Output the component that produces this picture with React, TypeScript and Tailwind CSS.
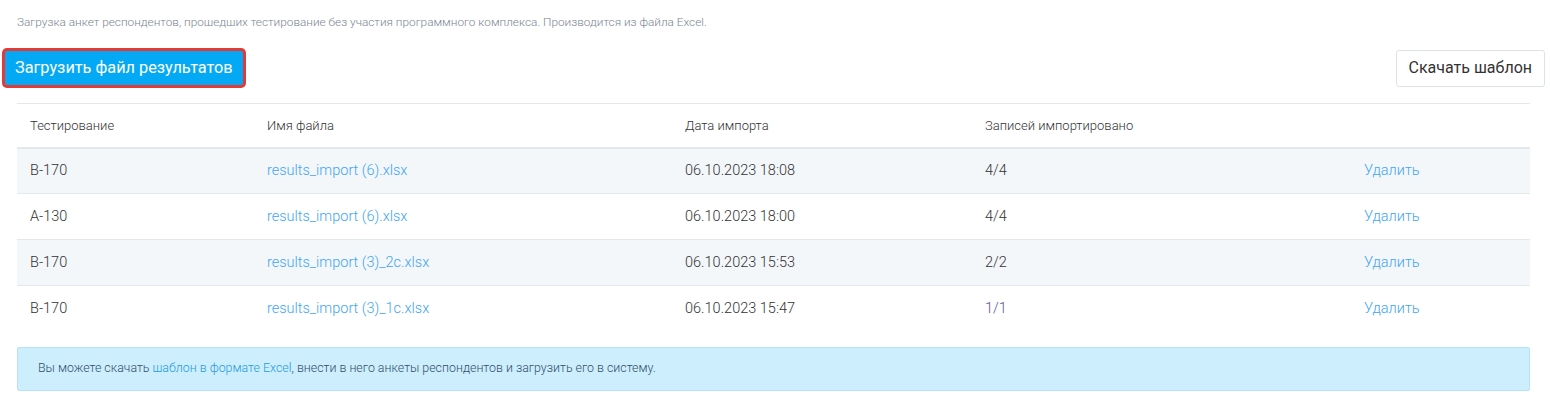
import React from 'react';

type ImportRow = {
  test: string;
  file: string;
  date: string;
  count: string;
  visited?: boolean;
};

const rows: ImportRow[] = [
  { test: 'B-170', file: 'results_import (6).xlsx', date: '06.10.2023 18:08', count: '4/4' },
  { test: 'A-130', file: 'results_import (6).xlsx', date: '06.10.2023 18:00', count: '4/4' },
  { test: 'B-170', file: 'results_import (3)_2c.xlsx', date: '06.10.2023 15:53', count: '2/2' },
  { test: 'B-170', file: 'results_import (3)_1c.xlsx', date: '06.10.2023 15:47', count: '1/1', visited: true },
];

export default function App() {
  return (
    <div className="w-[1550px] h-[401px] bg-white pt-[14px] font-['Roboto',sans-serif] font-light text-[#333]">
      <p className="px-[17px] text-[11.8px] leading-[16px] text-[#7b8590]">
        Загрузка анкет респондентов, прошедших тестирование без участия программного комплекса. Производится из файла Excel.
      </p>

      <div className="mt-[18px] px-[5px] h-[40px] flex items-center justify-between">
        <button className="h-[34px] px-[10px] bg-[#03a9f4] text-white text-[16.3px] font-normal rounded-[2px] ring-[3px] ring-[#e53935]">
          Загрузить файл результатов
        </button>
        <button className="h-[37px] px-[12px] bg-white border border-[#dde2e6] rounded-[3px] text-[16px] font-normal text-[#333]">
          Скачать шаблон
        </button>
      </div>

      <table className="mt-[15px] ml-[17px] w-[1513px] table-fixed border-collapse">
        <colgroup>
          <col className="w-[237px]" />
          <col className="w-[418px]" />
          <col className="w-[300px]" />
          <col className="w-[379px]" />
          <col className="w-[179px]" />
        </colgroup>
        <thead>
          <tr className="h-[44px] border-t border-b-2 border-[#e3e8ec]">
            <th className="pl-[13px] text-left font-light text-[13px]">Тестирование</th>
            <th className="pl-[13px] text-left font-light text-[13px]">Имя файла</th>
            <th className="pl-[13px] text-left font-light text-[13px]">Дата импорта</th>
            <th className="pl-[13px] text-left font-light text-[13px]">Записей импортировано</th>
            <th />
          </tr>
        </thead>
        <tbody>
          {rows.map((r, i) => (
            <tr
              key={i}
              className={`h-[46px] text-[14.5px] ${i % 2 === 0 ? 'bg-[#f3f7fa]' : 'bg-white'} ${i < rows.length - 1 ? 'border-b border-[#e3e8ec]' : ''}`}
            >
              <td className="pl-[13px]">{r.test}</td>
              <td className="pl-[13px]">
                <a href="#" className="text-[#42a5f5]">{r.file}</a>
              </td>
              <td className="pl-[13px]">{r.date}</td>
              <td className={`pl-[13px] ${r.visited ? 'text-[#5b4f8f]' : ''}`}>{r.count}</td>
              <td className="pl-[13px]">
                <a href="#" className="text-[#42a5f5]">Удалить</a>
              </td>
            </tr>
          ))}
        </tbody>
      </table>

      <div className="mt-[15px] ml-[17px] w-[1513px] h-[44px] flex items-center px-[20px] bg-[#cdeefd] border border-[#b6e3f7] rounded-[2px] text-[12.4px] text-[#31506b]">
        <span>
          Вы можете скачать <a href="#" className="text-[#1e9be0]">шаблон в формате Excel</a>, внести в него анкеты респондентов и загрузить его в систему.
        </span>
      </div>
    </div>
  );
}
